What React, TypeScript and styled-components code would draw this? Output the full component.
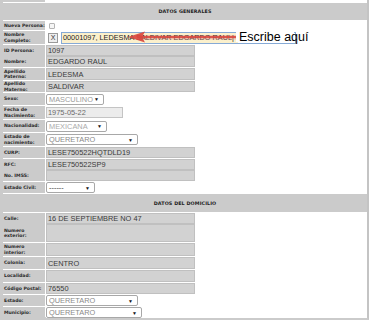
import React from 'react';
import styled, { createGlobalStyle } from 'styled-components';

const Global = createGlobalStyle`
  html, body { margin: 0; padding: 0; background: #fff; }
  body { width: 372px; height: 322px; overflow: hidden; }
`;

const Frame = styled.div`
  position: relative;
  width: 364px;
  border-left: 3px solid #cbcbcb;
  border-right: 2px solid #c4c4c4;
  border-bottom: 3px solid #cbcbcb;
  display: flex;
  flex-direction: column;
  gap: 1px;
  background: #fff;
`;

const Row = styled.div<{ $h: number }>`
  display: grid;
  grid-template-columns: 42px 1fr;
  column-gap: 1px;
  height: ${(p) => p.$h}px;
`;

const Label = styled.div`
  background: #cbcbcb;
  display: flex;
  align-items: center;
  padding-left: 1px;
  font-family: 'DejaVu Sans', Verdana, sans-serif;
  font-weight: bold;
  font-size: 4.6px;
  line-height: 5.2px;
  color: #2a2a2a;
  white-space: nowrap;
  overflow: hidden;
`;

const Value = styled.div`
  display: flex;
  align-items: center;
  background: #fff;
  min-width: 0;
`;

const Header = styled.div<{ $h: number }>`
  height: ${(p) => p.$h}px;
  background: #cbcbcb;
  display: flex;
  align-items: center;
  justify-content: center;
  font-family: 'DejaVu Sans', Verdana, sans-serif;
  font-weight: bold;
  font-size: 4.8px;
  color: #1e1e1e;
  letter-spacing: 0.1px;
`;

const TextBox = styled.div<{ $w: number }>`
  box-sizing: border-box;
  width: ${(p) => p.$w}px;
  height: 100%;
  background: #d2d2d2;
  border: 1px solid #c0c0c0;
  display: flex;
  align-items: center;
  padding-left: 1px;
  font-family: 'Liberation Sans', Arial, sans-serif;
  font-size: 7.4px;
  color: #3a3a3a;
  white-space: nowrap;
`;

const DateBox = styled.div`
  box-sizing: border-box;
  width: 77px;
  height: 11px;
  background: #ececec;
  border: 1px solid #c4c4c4;
  display: flex;
  align-items: center;
  padding-left: 1px;
  font-family: 'Liberation Sans', Arial, sans-serif;
  font-size: 7.4px;
  color: #6a6a6a;
`;

const SelectBox = styled.div<{ $w: number; $c: string }>`
  box-sizing: border-box;
  width: ${(p) => p.$w}px;
  height: 11px;
  background: #fff;
  border: 1px solid #a8a8a8;
  border-radius: 2px;
  display: flex;
  align-items: center;
  justify-content: space-between;
  padding: 0 4px 0 2px;
  font-family: 'Liberation Sans', Arial, sans-serif;
  font-size: 7.4px;
  color: ${(p) => p.$c};
  white-space: nowrap;
`;

const Caret = styled.span`
  font-size: 5px;
  color: #111;
`;

const Check = styled.div`
  box-sizing: border-box;
  width: 6px;
  height: 6px;
  margin-left: 3px;
  border: 1px solid #b4b4b4;
  border-radius: 1px;
  background: #f6f6f6;
`;

const XButton = styled.div`
  box-sizing: border-box;
  width: 10px;
  height: 10px;
  margin-left: 2px;
  border: 1px solid #9a9a9a;
  background: #eeeeee;
  display: flex;
  align-items: center;
  justify-content: center;
  font-family: 'Liberation Sans', Arial, sans-serif;
  font-size: 7px;
  color: #333;
`;

const NameInput = styled.div`
  box-sizing: border-box;
  width: 235px;
  height: 12px;
  margin-left: 3px;
  border: 1px solid #86aad6;
  background: linear-gradient(to right, #fbf0cc 0 176px, #fff 176px);
  display: flex;
  align-items: center;
  padding-left: 1px;
  font-family: 'Liberation Sans', Arial, sans-serif;
  font-size: 7.3px;
  color: #222;
  white-space: nowrap;
  overflow: hidden;
`;

const Callout = styled.div`
  position: absolute;
  left: 233px;
  top: 32px;
  width: 58px;
  height: 10px;
  background: #fff;
`;

const CalloutText = styled.span`
  position: absolute;
  left: 3px;
  top: -1px;
  line-height: 12px;
  font-family: 'Liberation Sans', Arial, sans-serif;
  font-size: 12.5px;
  color: #000;
  white-space: nowrap;
`;

const ArrowSvg = styled.svg`
  position: absolute;
  left: 122px;
  top: 30px;
`;

type RowDef =
  | { kind: 'header'; h: number; text: string }
  | { kind: 'row'; h: number; label: React.ReactNode; value?: React.ReactNode };

const tb = (w: number, t = '') => <TextBox $w={w}>{t}</TextBox>;
const sel = (w: number, t: string, c: string) => (
  <SelectBox $w={w} $c={c}>
    <span>{t}</span>
    <Caret>▼</Caret>
  </SelectBox>
);

const two = (a: string, b: string) => (
  <span>
    {a}
    <br />
    {b}
  </span>
);

const rows: RowDef[] = [
  { kind: 'row', h: 2, label: '' },
  { kind: 'header', h: 17, text: 'DATOS GENERALES' },
  { kind: 'row', h: 9, label: 'Nueva Persona:', value: <Check /> },
  {
    kind: 'row',
    h: 13,
    label: two('Nombre', 'Completo:'),
    value: (
      <>
        <XButton>X</XButton>
        <NameInput>00001097, LEDESMA SALDIVAR EDGARDO RAUL|</NameInput>
      </>
    ),
  },
  { kind: 'row', h: 10, label: 'ID Persona:', value: tb(149, '1097') },
  { kind: 'row', h: 11, label: 'Nombre:', value: tb(149, 'EDGARDO RAUL') },
  { kind: 'row', h: 12, label: two('Apellido', 'Paterno:'), value: tb(149, 'LEDESMA') },
  { kind: 'row', h: 11, label: two('Apellido', 'Materno:'), value: tb(149, 'SALDIVAR') },
  { kind: 'row', h: 12, label: 'Sexo:', value: sel(58, 'MASCULINO', '#9c9c9c') },
  { kind: 'row', h: 13, label: two('Fecha de', 'Nacimiento:'), value: <DateBox>1975-05-22</DateBox> },
  { kind: 'row', h: 12, label: 'Nacionalidad:', value: sel(61, 'MEXICANA', '#ababab') },
  { kind: 'row', h: 13, label: two('Estado de', 'nacimiento:'), value: sel(92, 'QUERETARO', '#8a8a8a') },
  { kind: 'row', h: 11, label: 'CURP:', value: tb(149, 'LESE750522HQTDLD19') },
  { kind: 'row', h: 10, label: 'RFC:', value: tb(149, 'LESE750522SP9') },
  { kind: 'row', h: 11, label: 'No. IMSS:', value: tb(149) },
  { kind: 'row', h: 11, label: 'Estado Civil:', value: sel(49, '------', '#333') },
  { kind: 'header', h: 18, text: 'DATOS DEL DOMICILIO' },
  { kind: 'row', h: 10, label: 'Calle:', value: tb(149, '16 DE SEPTIEMBRE NO 47') },
  { kind: 'row', h: 18, label: two('Numero', 'exterior:'), value: tb(149) },
  { kind: 'row', h: 13, label: two('Numero', 'interior:'), value: tb(149) },
  { kind: 'row', h: 12, label: 'Colonia:', value: tb(149, 'CENTRO') },
  { kind: 'row', h: 12, label: 'Localidad:', value: tb(149) },
  { kind: 'row', h: 11, label: 'Código Postal:', value: tb(149, '76550') },
  { kind: 'row', h: 11, label: 'Estado:', value: sel(92, 'QUERETARO', '#8a8a8a') },
  { kind: 'row', h: 10, label: 'Municipio:', value: sel(96, 'QUERETARO', '#8a8a8a') },
];

export default function App() {
  return (
    <>
      <Global />
      <Frame>
        {rows.map((r, i) =>
          r.kind === 'header' ? (
            <Header key={i} $h={r.h}>
              {r.text}
            </Header>
          ) : (
            <Row key={i} $h={r.h}>
              <Label>{r.label}</Label>
              <Value>{r.value}</Value>
            </Row>
          )
        )}
        <ArrowSvg width="126" height="14" viewBox="0 0 126 14">
          <line x1="122" y1="7" x2="12" y2="7" stroke="#d9463f" strokeWidth="2.4" strokeOpacity="0.9" />
          <line x1="122" y1="9" x2="14" y2="9" stroke="#e9a09c" strokeWidth="1.2" strokeOpacity="0.6" />
          <polygon points="3,7 20,1.5 17,7 20,12.5" fill="#d9463f" fillOpacity="0.92" />
        </ArrowSvg>
        <Callout>
          <CalloutText>Escribe aquí</CalloutText>
        </Callout>
      </Frame>
    </>
  );
}
